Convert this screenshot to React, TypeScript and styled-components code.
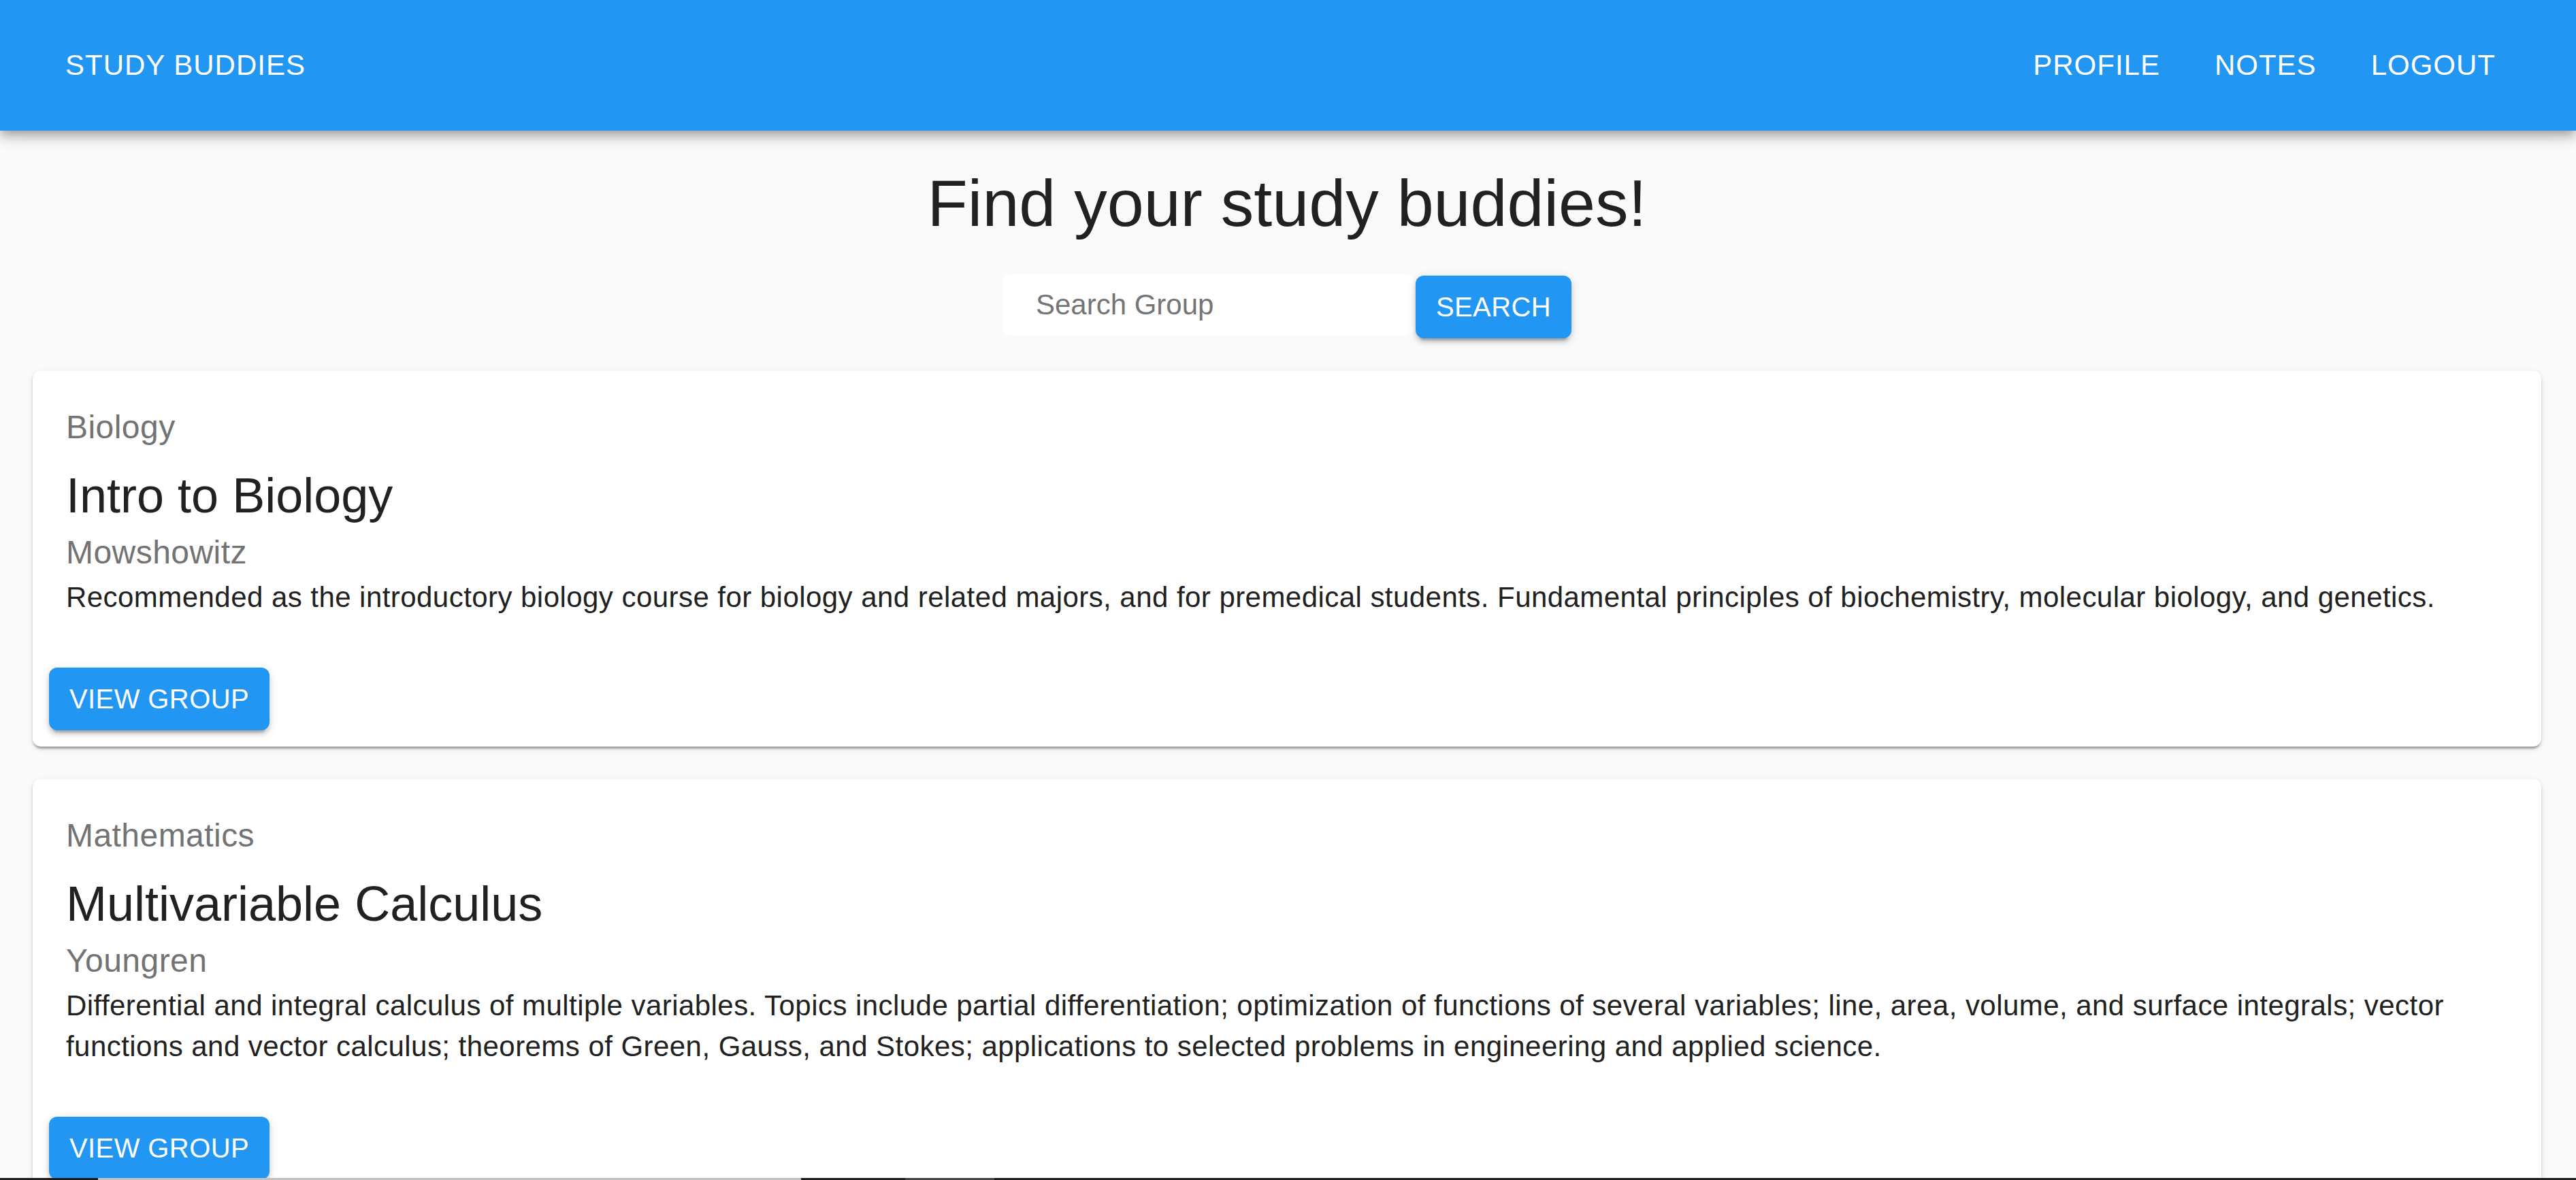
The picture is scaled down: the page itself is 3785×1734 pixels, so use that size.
import React from 'react'
import styled, { createGlobalStyle } from 'styled-components'

const GlobalStyle = createGlobalStyle`
  html {
    overflow: hidden;
  }
  body {
    margin: 0;
    background: #fafafa;
    font-family: 'Liberation Sans', Arial, sans-serif;
    color: #212121;
  }
  * {
    box-sizing: border-box;
  }
`

const AppBar = styled.header`
  height: 192px;
  background: #2196f3;
  display: flex;
  align-items: center;
  justify-content: space-between;
  padding: 0 94px 0 72px;
  box-shadow: 0 6px 12px -3px rgba(0, 0, 0, 0.2), 0 12px 15px 0 rgba(0, 0, 0, 0.14),
    0 3px 30px 0 rgba(0, 0, 0, 0.12);
  position: relative;
  z-index: 2;
`

const NavButton = styled.a`
  display: inline-flex;
  align-items: center;
  height: 108px;
  padding: 0 24px;
  color: #fff;
  font-size: 42px;
  letter-spacing: 1px;
  text-transform: uppercase;
  text-decoration: none;
  cursor: pointer;
`

const NavLinks = styled.nav`
  display: flex;
  gap: 32px;
`

const Main = styled.main`
  padding: 0 51px 48px 48px;
`

const Heading = styled.h1`
  margin: 47px 0 0;
  font-size: 97px;
  line-height: 119px;
  font-weight: 400;
  text-align: center;
  color: #212121;
`

const SearchRow = styled.form`
  display: flex;
  justify-content: center;
  align-items: flex-start;
  gap: 2px;
  margin: 45px 0 48px;
`

const SearchInput = styled.input`
  width: 605px;
  height: 90px;
  border: none;
  border-radius: 12px;
  background: #fff;
  padding: 0 24px 0 49px;
  font-family: 'Liberation Sans', Arial, sans-serif;
  font-size: 42px;
  color: #212121;
  outline: none;
  &::placeholder {
    color: #757575;
    opacity: 1;
  }
`

const ContainedButton = styled.button<{ $offset?: number }>`
  height: 92px;
  margin-top: ${(p) => p.$offset ?? 0}px;
  padding: 0 30px;
  border: none;
  border-radius: 12px;
  background: #2196f3;
  color: #fff;
  font-family: 'Liberation Sans', Arial, sans-serif;
  font-size: 40px;
  letter-spacing: 0.4px;
  text-transform: uppercase;
  cursor: pointer;
  box-shadow: 0 9px 3px -6px rgba(0, 0, 0, 0.2), 0 6px 6px 0 rgba(0, 0, 0, 0.14),
    0 3px 15px 0 rgba(0, 0, 0, 0.12);
`

const CardList = styled.div`
  display: flex;
  flex-direction: column;
  gap: 48px;
`

const Card = styled.article`
  background: #fff;
  border-radius: 12px;
  box-shadow: 0 6px 3px -3px rgba(0, 0, 0, 0.2), 0 3px 3px 0 rgba(0, 0, 0, 0.14),
    0 3px 9px 0 rgba(0, 0, 0, 0.12);
  overflow: hidden;
`

const CardContent = styled.div`
  padding: 47px 48px 49px 49px;
`

const Category = styled.div`
  font-size: 48px;
  line-height: 72px;
  letter-spacing: 0.45px;
  color: #737373;
  margin-bottom: 16px;
`

const CourseTitle = styled.h2`
  margin: 0;
  font-size: 72px;
  line-height: 96px;
  font-weight: 400;
  color: #212121;
`

const Instructor = styled.div`
  font-size: 48px;
  line-height: 72px;
  letter-spacing: 0.45px;
  color: #737373;
`

const Description = styled.p`
  margin: 0;
  font-size: 42px;
  line-height: 60px;
  letter-spacing: 0.45px;
  color: #212121;
`

const CardActions = styled.div`
  display: flex;
  padding: 24px;
`

const ScrollTrack = styled.div`
  position: fixed;
  left: 0;
  right: 0;
  bottom: 0;
  height: 3px;
  background: #1e1e1e;
  z-index: 5;
`

const ScrollThumb = styled.div<{ $left: number; $width: number; $color: string }>`
  position: absolute;
  top: 0;
  bottom: 0;
  left: ${(p) => p.$left}px;
  width: ${(p) => p.$width}px;
  background: ${(p) => p.$color};
`

const groups = [
  {
    subject: 'Biology',
    title: 'Intro to Biology',
    instructor: 'Mowshowitz',
    description:
      'Recommended as the introductory biology course for biology and related majors, and for premedical students. Fundamental principles of biochemistry, molecular biology, and genetics.',
  },
  {
    subject: 'Mathematics',
    title: 'Multivariable Calculus',
    instructor: 'Youngren',
    description:
      'Differential and integral calculus of multiple variables. Topics include partial differentiation; optimization of functions of several variables; line, area, volume, and surface integrals; vector functions and vector calculus; theorems of Green, Gauss, and Stokes; applications to selected problems in engineering and applied science.',
  },
]

const App = () => {
  return (
    <>
      <GlobalStyle />
      <AppBar>
        <NavButton>Study Buddies</NavButton>
        <NavLinks>
          <NavButton>Profile</NavButton>
          <NavButton>Notes</NavButton>
          <NavButton>Logout</NavButton>
        </NavLinks>
      </AppBar>
      <Main>
        <Heading>Find your study buddies!</Heading>
        <SearchRow onSubmit={(e) => e.preventDefault()}>
          <SearchInput placeholder="Search Group" />
          <ContainedButton type="submit" $offset={2}>
            Search
          </ContainedButton>
        </SearchRow>
        <CardList>
          {groups.map((g) => (
            <Card key={g.title}>
              <CardContent>
                <Category>{g.subject}</Category>
                <CourseTitle>{g.title}</CourseTitle>
                <Instructor>{g.instructor}</Instructor>
                <Description>{g.description}</Description>
              </CardContent>
              <CardActions>
                <ContainedButton type="button">View Group</ContainedButton>
              </CardActions>
            </Card>
          ))}
        </CardList>
      </Main>
      <ScrollTrack>
        <ScrollThumb $left={144} $width={1033} $color="#c1c1c1" />
        <ScrollThumb $left={1330} $width={131} $color="#454545" />
      </ScrollTrack>
    </>
  )
}

export default App
